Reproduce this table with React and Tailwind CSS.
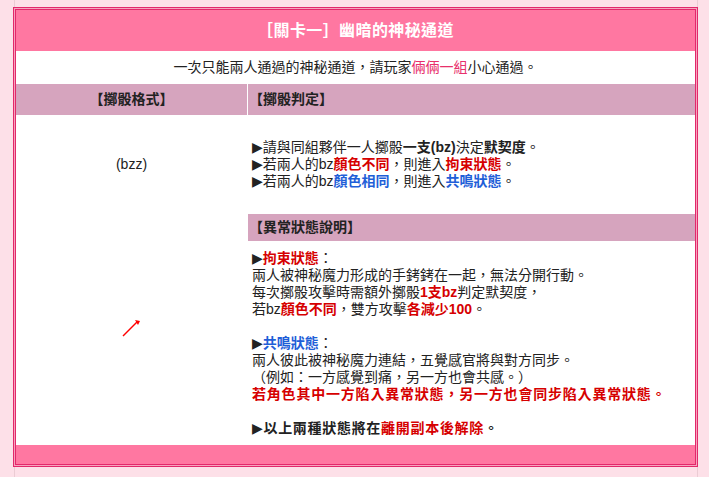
const FONT = "font-['Liberation_Sans','Noto_Sans_CJK_TC',sans-serif]";

const Arrow = () => <span className="font-['DejaVu_Sans']">▶</span>;
const Red = ({ children }) => <b className="text-[#d60000]">{children}</b>;
const Blue = ({ children }) => <b className="text-[#1f5fd8]">{children}</b>;

const App = () => {
  return (
    <div className={`h-[477px] bg-[#fde0e8] text-[14px] text-[#222] ${FONT}`}>
      <div className="ml-[14px] h-[477px] w-[684px] border-x border-[#ebccd4] pt-[7px]">
        <div className="-ml-[2px] w-[685px] border border-[#e2286b] bg-[#f7a3bd] p-px">
          <div className="flex flex-col border border-[#e2286b] bg-white">
            <div className="flex h-[41px] items-center justify-center bg-[#ff77a1] text-[16px] font-bold tracking-[0.4px] text-white">
              ［關卡一］幽暗的神秘通道
            </div>
            <div className="flex h-[33px] items-center justify-center">
              一次只能兩人通過的神秘通道，請玩家<span className="text-[#e8306c]">倆倆一組</span>小心通過。
            </div>
            <div className="flex h-[31px] gap-px font-bold">
              <div className="flex w-[231px] items-center justify-center bg-[#d6a4be]">【擲骰格式】</div>
              <div className="flex flex-1 items-center bg-[#d6a4be] pl-[1px]">【擲骰判定】</div>
            </div>
            <div className="flex h-[330px] gap-px">
              <div className="flex w-[231px] flex-col">
                <div className="flex h-[99px] items-center justify-center">(bzz)</div>
                <svg className="ml-[106px] mt-[104px]" width="20" height="20" viewBox="0 0 20 20">
                  <line x1="1" y1="18" x2="15" y2="4" stroke="#f00" strokeWidth="1.4" />
                  <path d="M13 2 L18 3 L16 7 Z" fill="#f00" />
                </svg>
              </div>
              <div className="flex flex-1 flex-col">
                <div className="flex h-[99px] flex-col justify-center pl-[4px] leading-[17px]">
                  <div>
                    <Arrow />請與同組夥伴一人擲骰<b>一支(bz)</b>決定<b>默契度</b>。
                  </div>
                  <div>
                    <Arrow />若兩人的bz<Red>顏色不同</Red>，則進入<Red>拘束狀態</Red>。
                  </div>
                  <div>
                    <Arrow />若兩人的bz<Blue>顏色相同</Blue>，則進入<Blue>共鳴狀態</Blue>。
                  </div>
                </div>
                <div className="flex h-[27px] items-center bg-[#d6a4be] pl-[1px] font-bold">【異常狀態說明】</div>
                <div className="pl-[4px] pt-[9px] leading-[17px]">
                  <div>
                    <Arrow /><Red>拘束狀態</Red>：
                  </div>
                  <div>兩人被神秘魔力形成的手銬銬在一起，無法分開行動。</div>
                  <div>
                    每次擲骰攻擊時需額外擲骰<Red>1支bz</Red>判定默契度，
                  </div>
                  <div>
                    若bz<Red>顏色不同</Red>，雙方攻擊<Red>各減少100</Red>。
                  </div>
                  <div className="h-[17px]" />
                  <div>
                    <Arrow /><Blue>共鳴狀態</Blue>：
                  </div>
                  <div>兩人彼此被神秘魔力連結，五覺感官將與對方同步。</div>
                  <div>（例如：一方感覺到痛，另一方也會共感。）</div>
                  <div className="tracking-[0.8px]">
                    <Red>若角色其中一方陷入異常狀態，另一方也會同步陷入異常狀態。</Red>
                  </div>
                  <div className="h-[17px]" />
                  <div className="tracking-[0.7px]">
                    <b>
                      <Arrow />以上兩種狀態將在
                    </b>
                    <Red>離開副本後解除</Red>
                    <b>。</b>
                  </div>
                </div>
              </div>
            </div>
            <div className="h-[19px] bg-[#ff77a1]" />
          </div>
        </div>
      </div>
    </div>
  );
};

export default App;
